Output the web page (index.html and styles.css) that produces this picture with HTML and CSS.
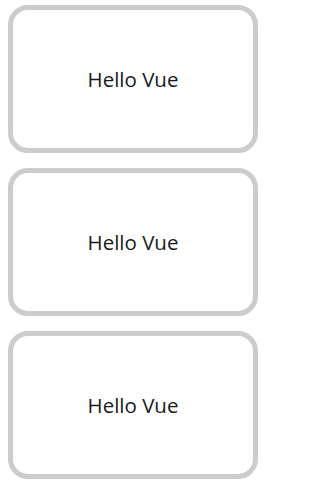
FILE: index.html
```html
<!DOCTYPE html>
<html lang="en">
<head>
<meta charset="utf-8">
<title>Hello Vue</title>
<link rel="stylesheet" href="styles.css">
</head>
<body>
<div class="list">
  <div class="card"><span class="msg">Hello Vue</span></div>
  <div class="card"><span class="msg">Hello Vue</span></div>
  <div class="card"><span class="msg">Hello Vue</span></div>
</div>
</body>
</html>
```

FILE: styles.css
```css
html, body {
  background: #ffffff;
}
body {
  margin: 5px 8px;
  font-family: "Open Sans", "Noto Sans", "Liberation Sans", sans-serif;
  color: #1a1a1a;
}
.list {
  display: flex;
  flex-direction: column;
  gap: 15px;
}
.card {
  box-sizing: border-box;
  width: 250px;
  height: 148px;
  border: 5px solid #cccccc;
  border-radius: 20px;
  display: flex;
  align-items: center;
  justify-content: center;
}
.msg {
  font-size: 20.5px;
}
```
